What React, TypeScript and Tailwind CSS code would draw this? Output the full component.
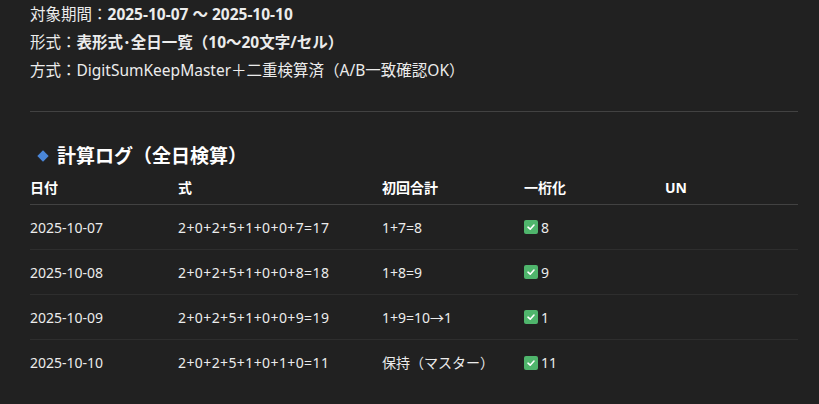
const rows = [
  { date: "2025-10-07", expr: "2+0+2+5+1+0+0+7=17", first: "1+7=8", digit: "8" },
  { date: "2025-10-08", expr: "2+0+2+5+1+0+0+8=18", first: "1+8=9", digit: "9" },
  { date: "2025-10-09", expr: "2+0+2+5+1+0+0+9=19", first: "1+9=10→1", digit: "1" },
  { date: "2025-10-10", expr: "2+0+2+5+1+0+1+0=11", first: "保持（マスター）", digit: "11" },
];

function CheckBox() {
  return (
    <span className="inline-flex items-center justify-center w-[14px] h-[14px] rounded-[2px] bg-[#4fb56c]">
      <svg width="10" height="10" viewBox="0 0 10 10" fill="none">
        <path
          d="M2 5.2 L4.2 7.2 L8 3"
          stroke="white"
          strokeWidth="1.6"
          strokeLinecap="round"
          strokeLinejoin="round"
        />
      </svg>
    </span>
  );
}

export default function App() {
  return (
    <div
      className="w-[819px] h-[404px] overflow-hidden bg-[#212121] text-[#ececec] pl-[30px] pr-[21px]"
      style={{ fontFamily: '"Noto Sans", "Noto Sans CJK JP", sans-serif' }}
    >
      <div className="text-[15.5px] leading-[28px]">
        <p>
          対象期間：<span className="font-bold">2025-10-07 〜 2025-10-10</span>
        </p>
        <p>
          形式：<span className="font-bold">表形式･全日一覧（10〜20文字/セル）</span>
        </p>
        <p>方式：DigitSumKeepMaster＋二重検算済（A/B一致確認OK）</p>
      </div>

      <div className="mt-[27px] h-px bg-[#424242]" />

      <h3 className="mt-[29px] flex items-center text-[19px] leading-[30px] font-bold text-white">
        <span className="ml-[9px] mr-[10px] w-[8px] h-[8px] rotate-45 bg-[#4a86d8]" />
        計算ログ（全日検算）
      </h3>

      <table className="mt-[7px] w-full text-[14px] border-collapse table-fixed">
        <colgroup>
          <col className="w-[148px]" />
          <col className="w-[204px]" />
          <col className="w-[142px]" />
          <col className="w-[141px]" />
          <col />
        </colgroup>
        <thead>
          <tr className="border-b border-[#424242] text-left font-bold text-white">
            <th className="pb-[6px] leading-[20px]">日付</th>
            <th className="pb-[6px] leading-[20px]">式</th>
            <th className="pb-[6px] leading-[20px]">初回合計</th>
            <th className="pb-[6px] leading-[20px]">一桁化</th>
            <th className="pb-[6px] leading-[20px]">UN</th>
          </tr>
        </thead>
        <tbody>
          {rows.map((r, i) => (
            <tr
              key={r.date}
              className={i < rows.length - 1 ? "h-[45px] border-b border-[#2e2e2e]" : "h-[45px]"}
            >
              <td>{r.date}</td>
              <td className="tracking-[0.4px]">{r.expr}</td>
              <td>{r.first}</td>
              <td>
                <span className="inline-flex items-center gap-[3px]">
                  <CheckBox />
                  {r.digit}
                </span>
              </td>
              <td />
            </tr>
          ))}
        </tbody>
      </table>
    </div>
  );
}
